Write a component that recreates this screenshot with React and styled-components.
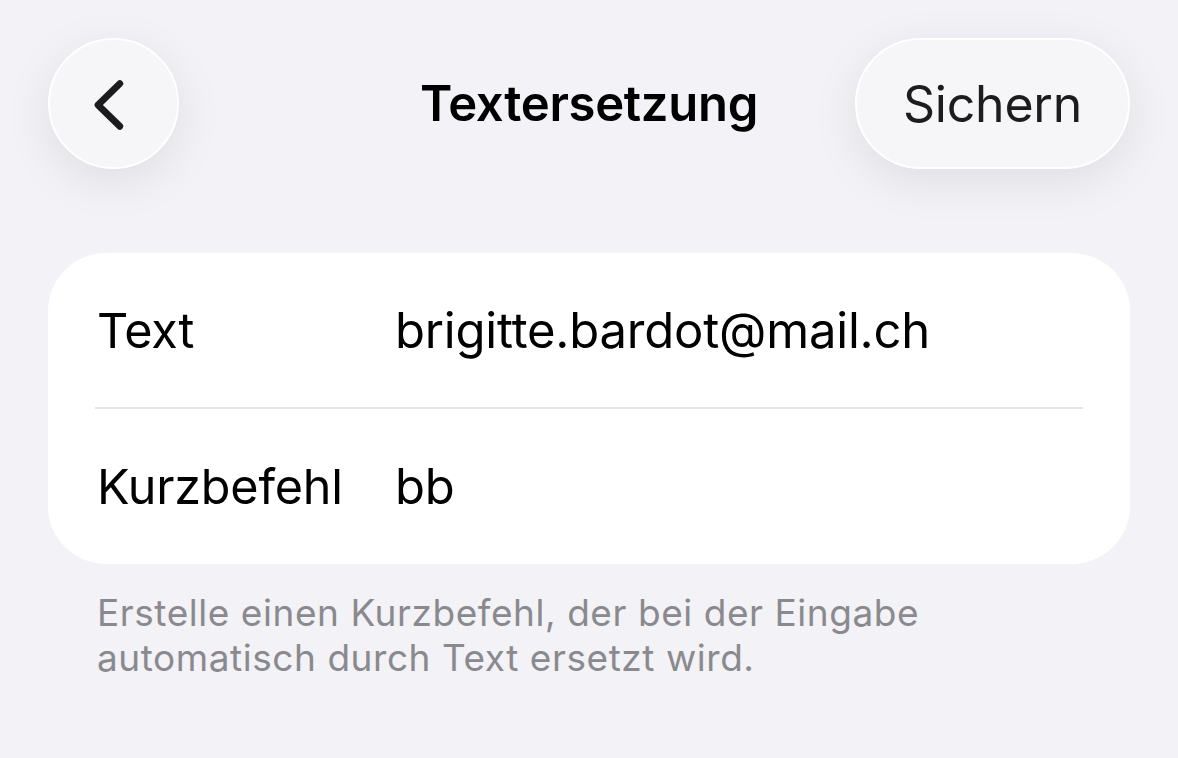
import React from "react";
import styled, { createGlobalStyle } from "styled-components";

const GlobalStyle = createGlobalStyle`
  html, body {
    margin: 0;
    background: #f2f2f7;
    font-family: Inter, "Noto Sans", sans-serif;
    -webkit-font-smoothing: antialiased;
  }
`;

export default function App() {
  return (
    <>
      <GlobalStyle />
      <Page>
        <Header>
          <RoundButton aria-label="Zurück">
            <svg width="131" height="131" viewBox="0 0 131 131">
              <path
                d="M72 45 L49.5 67 L72 89"
                fill="none"
                stroke="#1c1c1e"
                strokeWidth="7"
                strokeLinecap="round"
                strokeLinejoin="round"
              />
            </svg>
          </RoundButton>
          <Title>Textersetzung</Title>
          <PillButton>Sichern</PillButton>
        </Header>

        <Card>
          <Row>
            <Label>Text</Label>
            <Value>brigitte.bardot@mail.ch</Value>
          </Row>
          <Divider />
          <Row $tall>
            <Label>Kurzbefehl</Label>
            <Value>bb</Value>
          </Row>
        </Card>

        <Footnote>
          Erstelle einen Kurzbefehl, der bei der Eingabe
          <br />
          automatisch durch Text ersetzt wird.
        </Footnote>
      </Page>
    </>
  );
}

const Page = styled.main`
  box-sizing: border-box;
  min-height: 758px;
  padding: 38px 48px 0;
`;

const Header = styled.header`
  display: grid;
  grid-template-columns: 1fr auto 1fr;
  align-items: center;
  height: 131px;

  > :first-child {
    justify-self: start;
  }
  > :last-child {
    justify-self: end;
  }
`;

const buttonSurface = `
  box-sizing: border-box;
  height: 131px;
  padding: 0;
  border: 2px solid #ffffff;
  background: #f6f6f8;
  box-shadow: 0 12px 48px rgba(0, 0, 0, 0.085);
  color: #1c1c1e;
  font-family: inherit;
`;

const RoundButton = styled.button`
  ${buttonSurface}
  width: 131px;
  border-radius: 50%;
  display: flex;
  align-items: center;
  justify-content: center;

  svg {
    display: block;
  }
`;

const PillButton = styled.button`
  ${buttonSurface}
  width: 275px;
  border-radius: 66px;
  font-size: 50px;
  font-weight: 400;
  letter-spacing: -0.2px;
`;

const Title = styled.h1`
  margin: 0;
  text-align: center;
  font-size: 49px;
  font-weight: 600;
  letter-spacing: -0.3px;
  color: #000;
`;

const Card = styled.section`
  margin-top: 84px;
  background: #ffffff;
  border-radius: 58px;
  overflow: hidden;
`;

const Row = styled.div`
  display: grid;
  grid-template-columns: 298px 1fr;
  align-items: center;
  height: ${(p) => (p.$tall ? "155px" : "154px")};
  padding: 0 49px;
`;

const Label = styled.span`
  font-size: 48.5px;
  color: #000;
  letter-spacing: -0.2px;
`;

const Value = styled(Label)`
  font-size: 49px;
`;

const Divider = styled.hr`
  margin: 0 47px;
  height: 2px;
  border: 0;
  background: #e4e4e9;
`;

const Footnote = styled.p`
  margin: 26px 0 0;
  padding-left: 49px;
  font-size: 37px;
  line-height: 45px;
  color: #8a8a8e;
  letter-spacing: 0.55px;
`;
